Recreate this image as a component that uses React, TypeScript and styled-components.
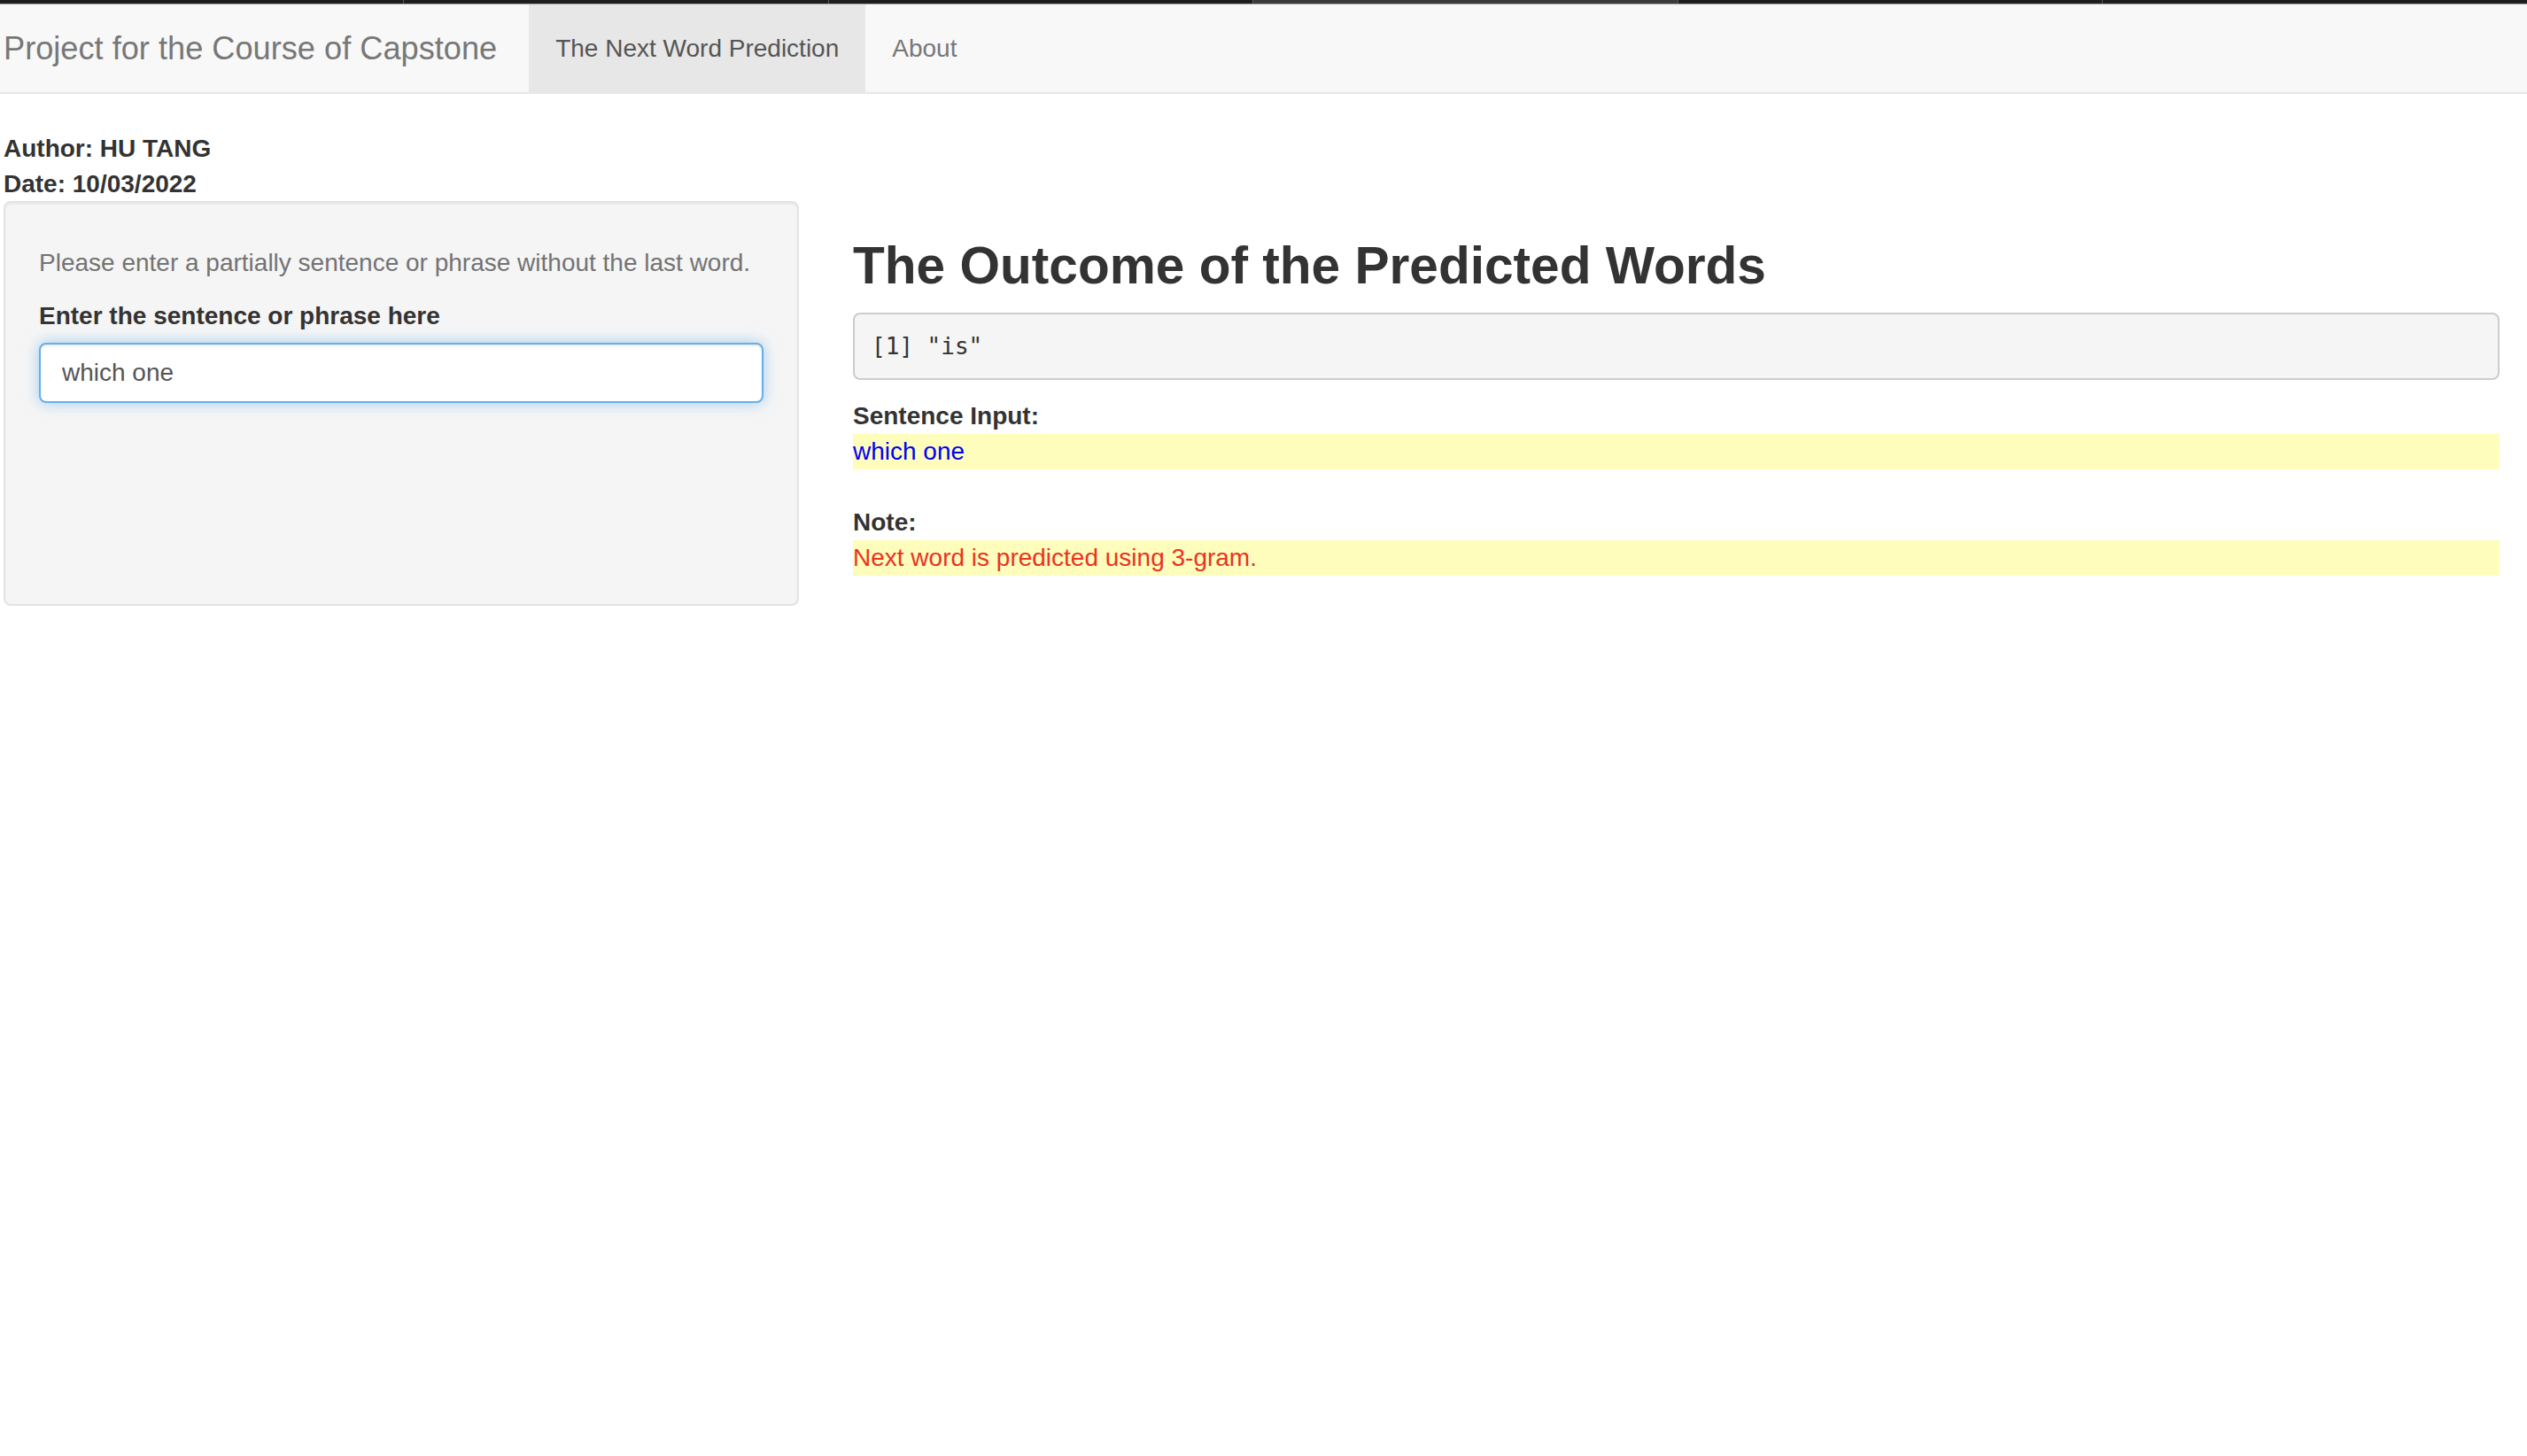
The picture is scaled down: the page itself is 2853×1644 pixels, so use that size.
import React from "react";
import styled, { createGlobalStyle } from "styled-components";

const GlobalStyle = createGlobalStyle`
  html, body {
    margin: 0;
    padding: 0;
    background: #ffffff;
  }
  body {
    font-family: "Liberation Sans", Arial, Helvetica, sans-serif;
    font-size: 28px;
    line-height: 40px;
    color: #333333;
  }
  * { box-sizing: border-box; }
`;

const TabStrip = styled.div`
  display: flex;
  height: 5px;
  background: #1d1d1d;
  border-bottom: 1px solid #9a9a9a;
`;

const TabSeg = styled.div<{ $light?: boolean; $first?: boolean }>`
  flex: ${(p) => (p.$first ? "0 0 455px" : "1 1 0")};
  background: ${(p) => (p.$light ? "#3a3a3a" : "#1d1d1d")};
  border-left: ${(p) => (p.$first ? "none" : "1px solid #5a5a5a")};
`;

const Navbar = styled.nav`
  display: flex;
  align-items: stretch;
  height: 101px;
  background: #f8f8f8;
  border-bottom: 2px solid #e7e7e7;
  padding-left: 4px;
`;

const Brand = styled.div`
  display: flex;
  align-items: center;
  font-size: 36.2px;
  color: #777777;
  padding-right: 36px;
  white-space: nowrap;
`;

const NavItem = styled.div<{ $active?: boolean }>`
  display: flex;
  align-items: center;
  padding: 0 30px;
  font-size: 28px;
  color: ${(p) => (p.$active ? "#555555" : "#777777")};
  background: ${(p) => (p.$active ? "#e7e7e7" : "transparent")};
  white-space: nowrap;
`;

const Page = styled.main`
  padding: 42px 31px 0 4px;
`;

const MetaLine = styled.div`
  font-weight: 700;
  line-height: 40px;
`;

const Row = styled.div`
  display: grid;
  grid-template-columns: 898px 1fr;
  column-gap: 61px;
  align-items: start;
  margin-top: -1px;
`;

const Well = styled.section`
  height: 457px;
  background: #f5f5f5;
  border: 2px solid #e3e3e3;
  border-radius: 8px;
  padding: 38px;
  box-shadow: inset 0 2px 2px rgba(0, 0, 0, 0.05);
`;

const HelpText = styled.p`
  margin: 10px 0 20px;
  color: #737373;
`;

const FormLabel = styled.label`
  display: block;
  font-weight: 700;
  margin-bottom: 10px;
`;

const TextInput = styled.input`
  display: block;
  width: 100%;
  height: 68px;
  padding: 12px 24px;
  font-family: inherit;
  font-size: 28px;
  color: #555555;
  background: #ffffff;
  border: 2px solid #66afe9;
  border-radius: 8px;
  outline: none;
  box-shadow: inset 0 2px 2px rgba(0, 0, 0, 0.075),
    0 0 16px rgba(102, 175, 233, 0.6);
`;

const MainCol = styled.section`
  min-width: 0;
`;

const Heading = styled.h2`
  margin: 40px 0 20px;
  font-size: 58.6px;
  line-height: 66px;
  font-weight: 700;
  color: #333333;
`;

const Pre = styled.pre`
  margin: 0 0 21px;
  padding: 17px 19px;
  background: #f5f5f5;
  border: 2px solid #cccccc;
  border-radius: 8px;
  font-family: "DejaVu Sans Mono", Menlo, Consolas, monospace;
  font-size: 26px;
  line-height: 38px;
  color: #333333;
`;

const FieldLabel = styled.div<{ $spaced?: boolean }>`
  font-weight: 700;
  line-height: 40px;
  margin-top: ${(p) => (p.$spaced ? "40px" : "0")};
`;

const Highlight = styled.div<{ $color: string }>`
  background: #fffdbc;
  color: ${(p) => p.$color};
  line-height: 40px;
`;

export default function App() {
  return (
    <>
      <GlobalStyle />
      <TabStrip>
        <TabSeg $first />
        <TabSeg />
        <TabSeg />
        <TabSeg $light />
        <TabSeg />
        <TabSeg />
      </TabStrip>
      <Navbar>
        <Brand>Project for the Course of Capstone</Brand>
        <NavItem $active>The Next Word Prediction</NavItem>
        <NavItem>About</NavItem>
      </Navbar>
      <Page>
        <MetaLine>Author: HU TANG</MetaLine>
        <MetaLine>Date: 10/03/2022</MetaLine>
        <Row>
          <Well>
            <HelpText>Please enter a partially sentence or phrase without the last word.</HelpText>
            <FormLabel htmlFor="sentence">Enter the sentence or phrase here</FormLabel>
            <TextInput id="sentence" type="text" defaultValue="which one" readOnly />
          </Well>
          <MainCol>
            <Heading>The Outcome of the Predicted Words</Heading>
            <Pre>[1] "is"</Pre>
            <FieldLabel>Sentence Input:</FieldLabel>
            <Highlight $color="#0000f5">which one</Highlight>
            <FieldLabel $spaced>Note:</FieldLabel>
            <Highlight $color="#ea3323">Next word is predicted using 3-gram.</Highlight>
          </MainCol>
        </Row>
      </Page>
    </>
  );
}
